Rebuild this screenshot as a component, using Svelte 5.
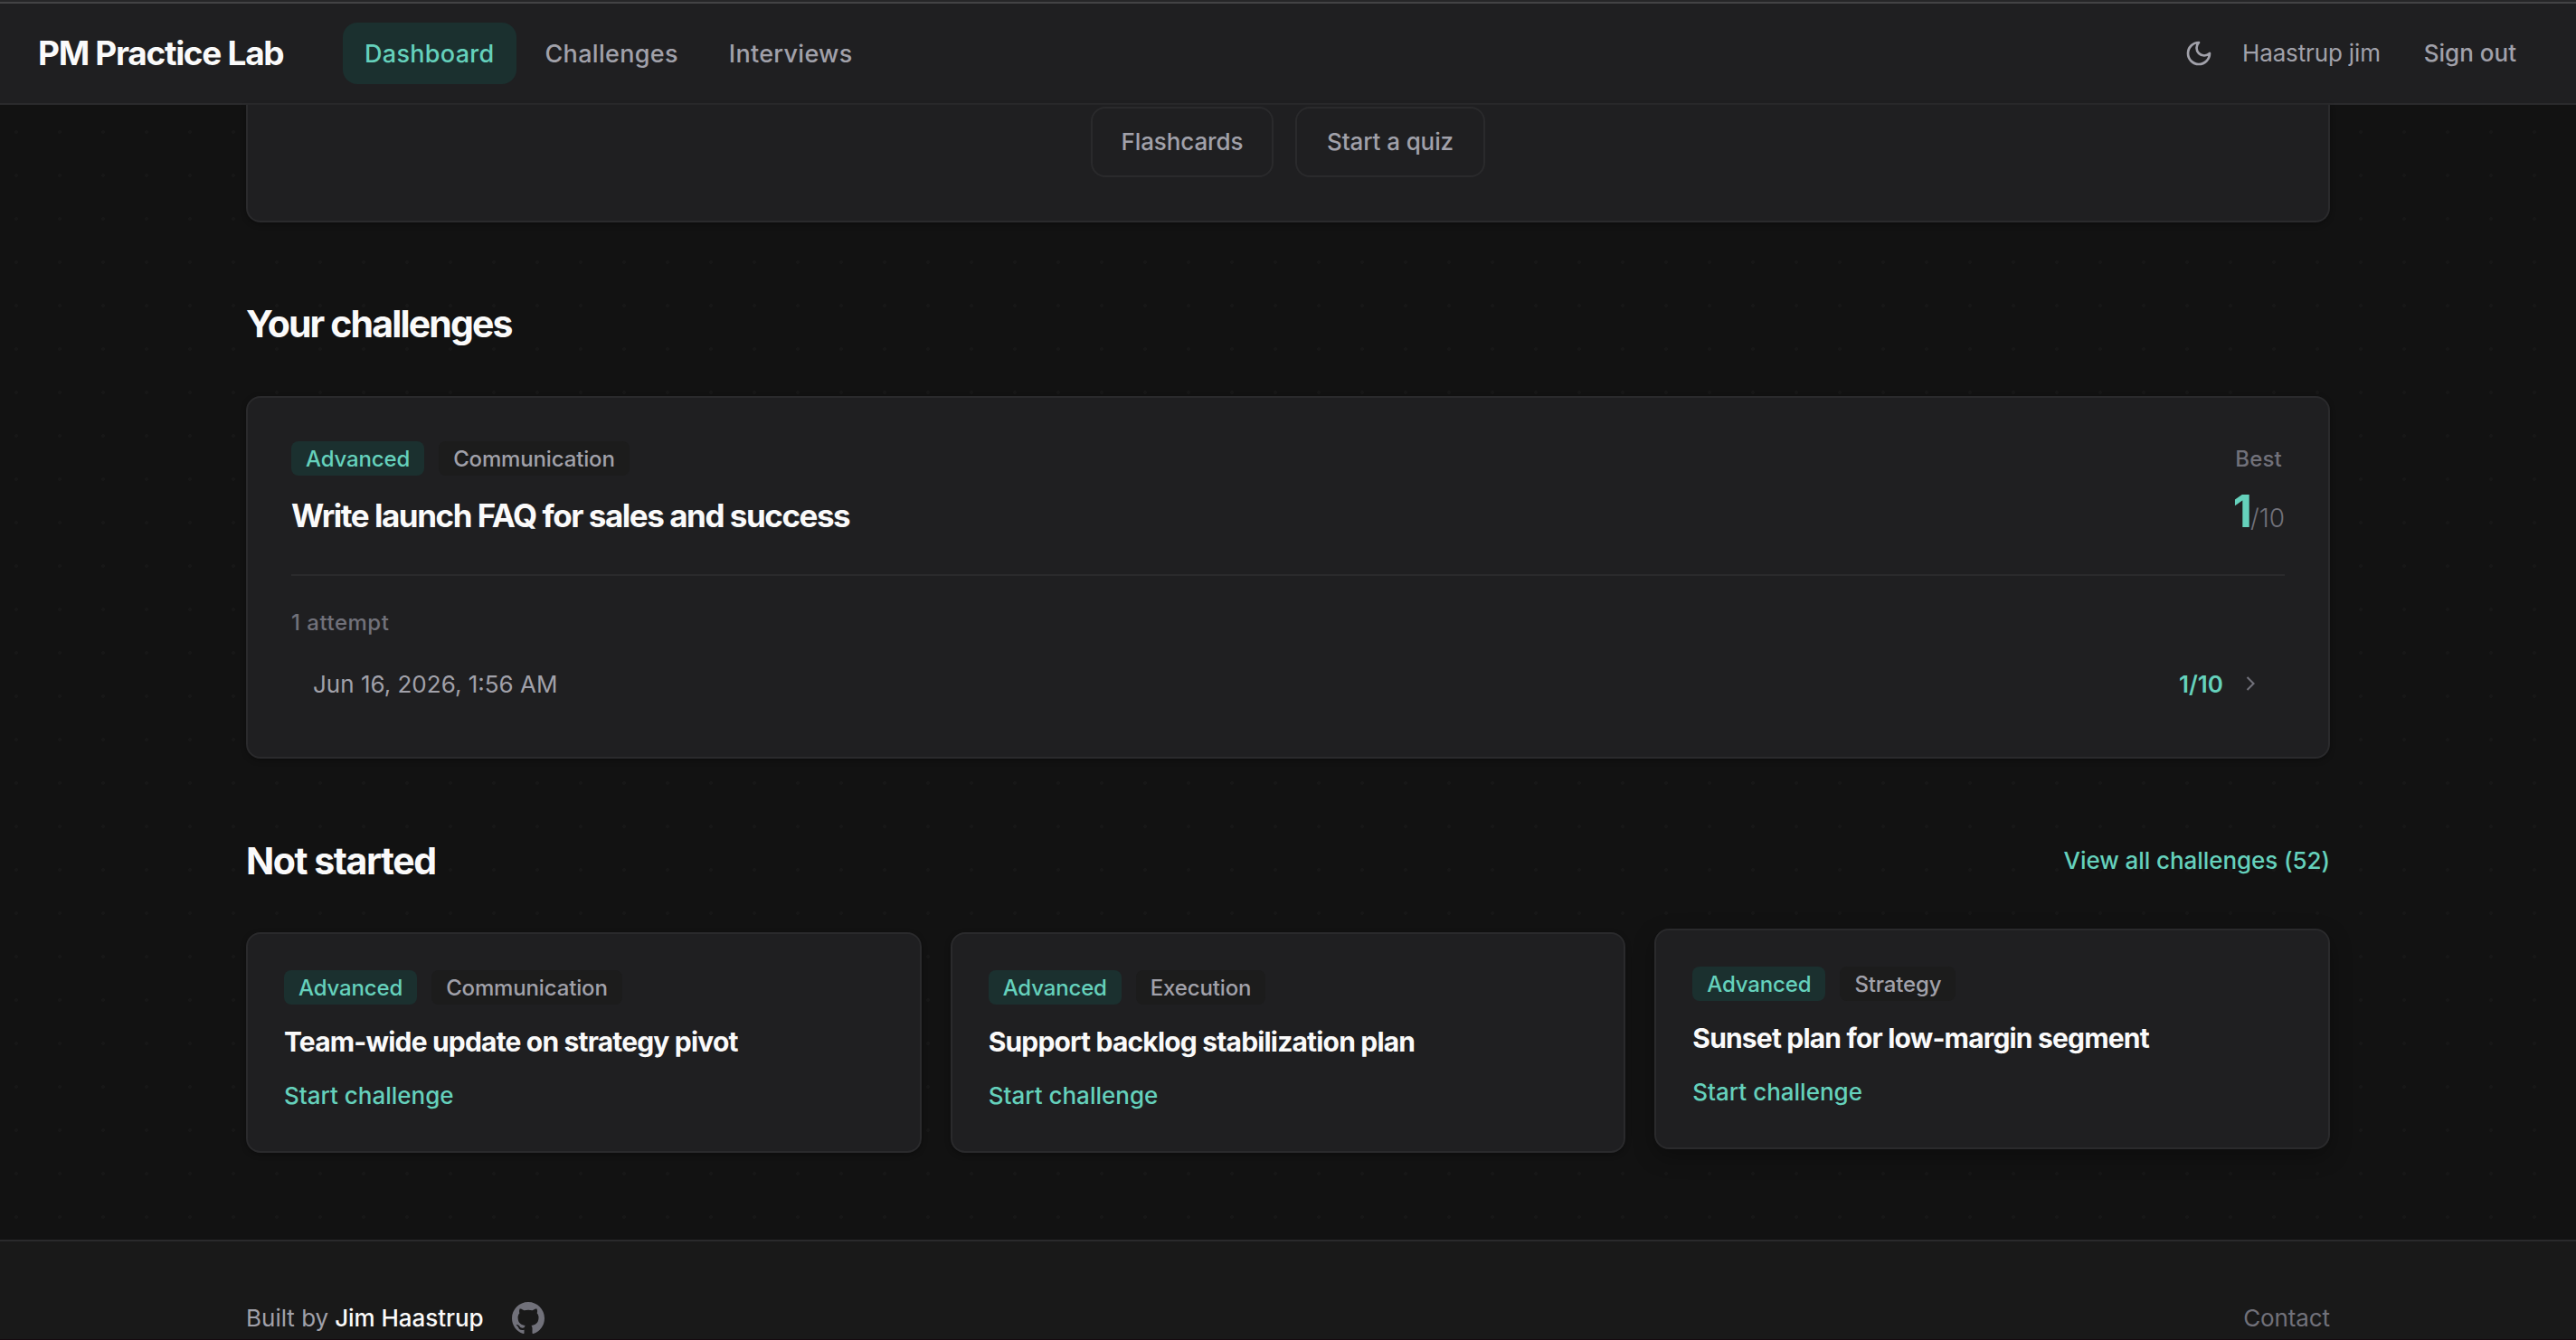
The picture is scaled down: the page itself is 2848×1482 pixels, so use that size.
<script>
    const links = ['Dashboard', 'Challenges', 'Interviews']
    let active = 'Dashboard'

    const notStarted = [
        { level: 'Advanced', topic: 'Communication', title: 'Team-wide update on strategy pivot' },
        { level: 'Advanced', topic: 'Execution', title: 'Support backlog stabilization plan' },
        { level: 'Advanced', topic: 'Strategy', title: 'Sunset plan for low-margin segment', raised: true }
    ]
    const total = 52
</script>

<div class="page">
    <header>
        <div class="brand">PM Practice Lab</div>
        <nav>
            {#each links as link}
                <button class="nav-link" class:active={link === active} on:click={() => active = link}>{link}</button>
            {/each}
        </nav>
        <div class="account">
            <svg class="moon" viewBox="0 0 24 24"><path d="M12 3a6 6 0 0 0 9 9 9 9 0 1 1-9-9Z" /></svg>
            <span class="user">Haastrup jim</span>
            <span class="signout">Sign out</span>
        </div>
    </header>

    <main>
        <section class="card practice">
            <button class="outline flash">Flashcards</button>
            <button class="outline quiz">Start a quiz</button>
        </section>

        <h2 class="yours">Your challenges</h2>
        <section class="card challenge">
            <div class="top">
                <div>
                    <div class="badges">
                        <span class="badge level">Advanced</span>
                        <span class="badge topic">Communication</span>
                    </div>
                    <h3>Write launch FAQ for sales and success</h3>
                </div>
                <div class="best">
                    <span class="label">Best</span>
                    <div class="score"><b>1</b><span>/10</span></div>
                </div>
            </div>
            <div class="attempts">1 attempt</div>
            <div class="attempt">
                <span class="date">Jun 16, 2026, 1:56 AM</span>
                <span class="result">1/10</span>
                <svg class="chevron" viewBox="0 0 24 24"><path d="M9 18l6-6-6-6" /></svg>
            </div>
        </section>

        <div class="heading">
            <h2 class="not">Not started</h2>
            <span class="all">View all challenges ({total})</span>
        </div>
        <div class="grid">
            {#each notStarted as item}
                <article class="card small" class:raised={item.raised}>
                    <div class="badges">
                        <span class="badge level">{item.level}</span>
                        <span class="badge topic">{item.topic}</span>
                    </div>
                    <h4>{item.title}</h4>
                    <span class="start">Start challenge</span>
                </article>
            {/each}
        </div>
    </main>

    <footer>
        <div class="inner">
            <span class="built">Built by</span>
            <span class="author">Jim Haastrup</span>
            <svg class="github" viewBox="0 0 16 16"><path d="M8 0C3.58 0 0 3.58 0 8c0 3.54 2.29 6.53 5.47 7.59.4.07.55-.17.55-.38 0-.19-.01-.82-.01-1.49-2.01.37-2.53-.49-2.69-.94-.09-.23-.48-.94-.82-1.13-.28-.15-.68-.52-.01-.53.63-.01 1.08.58 1.23.82.72 1.21 1.87.87 2.33.66.07-.52.28-.87.51-1.07-1.78-.2-3.64-.89-3.64-3.95 0-.87.31-1.59.82-2.15-.08-.2-.36-1.02.08-2.12 0 0 .67-.21 2.2.82.64-.18 1.32-.27 2-.27s1.36.09 2 .27c1.53-1.04 2.2-.82 2.2-.82.44 1.1.16 1.92.08 2.12.51.56.82 1.27.82 2.15 0 3.07-1.87 3.75-3.65 3.95.29.25.54.73.54 1.48 0 1.07-.01 1.93-.01 2.2 0 .21.15.46.55.38A8.01 8.01 0 0 0 16 8c0-4.42-3.58-8-8-8Z" /></svg>
            <span class="contact">Contact</span>
        </div>
    </footer>
</div>

<style>
    :global(body) {
        margin: 0;
        overflow: hidden;
        background: #121212;
    }
    .page {
        width: 2848px;
        height: 1482px;
        box-sizing: border-box;
        overflow: hidden;
        display: flex;
        flex-direction: column;
        font-family: Inter, sans-serif;
        font-size: 26px;
        color: #a1a1aa;
        white-space: nowrap;
        background: radial-gradient(circle, #171717 1.8px, transparent 2.2px) -6px -22px / 48px 48px, #121212;
        border-bottom: 1px solid #150a10;
    }
    button {
        font: inherit;
        color: inherit;
        background: none;
        border: 0;
        padding: 0;
        font-weight: 500;
    }
    h2, h3, h4 {
        margin: 0;
        color: #fafafa;
        font-weight: 700;
    }
    header {
        flex: none;
        height: 116px;
        box-sizing: border-box;
        display: flex;
        align-items: center;
        padding: 0 66px 0 42px;
        background: linear-gradient(#262628 2px, #434345 2px 4px, #1f1f21 4px);
        border-bottom: 2px solid #2a2a2c;
    }
    .brand {
        width: 337px;
        font-size: 37px;
        font-weight: 700;
        letter-spacing: -1.3px;
        color: #fafafa;
        padding-top: 3px;
    }
    nav {
        display: flex;
        gap: 8px;
        padding-top: 3px;
    }
    .nav-link {
        height: 68px;
        padding: 1px 24px 0;
        border-radius: 16px;
        font-size: 27px;
        letter-spacing: 0.3px;
    }
    .nav-link.active {
        color: #65d1bc;
        background: #1b302f;
    }
    .account {
        margin-left: auto;
        display: flex;
        align-items: center;
        padding-top: 3px;
    }
    .moon {
        width: 32px;
        height: 32px;
        margin-right: 32px;
        fill: none;
        stroke: #a1a1aa;
        stroke-width: 2;
        stroke-linecap: round;
        stroke-linejoin: round;
    }
    .user {
        margin-right: 48px;
        letter-spacing: -0.15px;
    }
    .signout {
        font-weight: 500;
    }
    main {
        width: 2304px;
        margin: 0 auto;
        flex: none;
        height: 1255px;
    }
    .card {
        box-sizing: border-box;
        background: #1f1f21;
        border: 2px solid #2a2a2c;
        border-radius: 16px;
        box-shadow: 0 2px 6px rgba(0, 0, 0, 0.3);
    }
    .practice {
        height: 130px;
        border-top: 0;
        border-radius: 0 0 16px 16px;
        display: flex;
        justify-content: center;
        align-items: flex-start;
        gap: 24px;
        padding-top: 2px;
    }
    .outline {
        height: 78px;
        box-sizing: border-box;
        padding-bottom: 2px;
        border: 2px solid #2a2a2c;
        border-radius: 16px;
        letter-spacing: -0.1px;
    }
    .flash {
        width: 202px;
    }
    .quiz {
        width: 210px;
    }
    h2 {
        font-size: 41px;
        line-height: 50px;
    }
    .yours {
        padding: 87px 0 55px;
        letter-spacing: -1.85px;
    }
    .not {
        letter-spacing: -1.45px;
    }
    .challenge {
        height: 401px;
        padding: 48px;
    }
    .top {
        height: 149px;
        box-sizing: border-box;
        display: flex;
        justify-content: space-between;
        border-bottom: 2px solid #2a2a2c;
    }
    .badges {
        display: flex;
        gap: 16px;
    }
    .badge {
        height: 38px;
        line-height: 40px;
        padding: 0 16px;
        border-radius: 8px;
        font-size: 24px;
        font-weight: 500;
        letter-spacing: -0.15px;
    }
    .level {
        color: #65d1bc;
        background: #1b302f;
    }
    .topic {
        background: #1c1c1c;
    }
    h3 {
        margin-top: 20px;
        font-size: 35px;
        line-height: 48px;
        letter-spacing: -1.46px;
    }
    .best {
        text-align: right;
        color: #71717a;
    }
    .label {
        display: block;
        line-height: 40px;
        font-size: 24px;
        font-weight: 500;
        letter-spacing: 0.2px;
        padding-right: 3px;
    }
    .score {
        line-height: 56px;
        margin-top: 10px;
        font-size: 28px;
        font-weight: 300;
    }
    .score b {
        font-size: 49px;
        font-weight: 700;
        letter-spacing: -2px;
        color: #65d1bc;
    }
    .attempts {
        margin-top: 36px;
        line-height: 32px;
        font-size: 24px;
        font-weight: 500;
        letter-spacing: 0.5px;
        color: #71717a;
    }
    .attempt {
        display: flex;
        align-items: center;
        height: 64px;
        margin-top: 19px;
        padding: 0 24px;
    }
    .result {
        margin-left: auto;
        font-weight: 600;
        color: #65d1bc;
    }
    .chevron {
        width: 28px;
        height: 28px;
        margin-left: 16px;
        fill: none;
        stroke: #71717a;
        stroke-width: 1.8;
    }
    .heading {
        display: flex;
        justify-content: space-between;
        align-items: center;
        height: 50px;
        padding: 88px 0 54px;
    }
    .all, .start {
        color: #65d1bc;
        font-weight: 500;
    }
    .all {
        padding-bottom: 2px;
        letter-spacing: -0.07px;
    }
    .grid {
        display: grid;
        grid-template-columns: repeat(3, 1fr);
        gap: 32px;
    }
    .small {
        height: 244px;
        padding: 40px;
    }
    .raised {
        transform: translateY(-4px);
        box-shadow: 0 8px 24px rgba(0, 0, 0, 0.3);
    }
    h4 {
        margin-top: 20px;
        font-size: 30px;
        line-height: 42px;
        letter-spacing: -0.82px;
    }
    .start {
        display: block;
        margin-top: 21px;
        line-height: 36px;
    }
    footer {
        flex: 1;
        background: #191919;
        border-top: 2px solid #2a2a2c;
    }
    .inner {
        width: 2304px;
        height: 169px;
        margin: 0 auto;
        display: flex;
        align-items: center;
    }
    .author {
        margin-left: 7px;
        font-weight: 500;
        letter-spacing: -0.05px;
        color: #fafafa;
    }
    .github {
        width: 36px;
        height: 36px;
        margin-left: 31px;
        fill: #71717a;
    }
    .contact {
        margin-left: auto;
        color: #71717a;
        letter-spacing: -0.1px;
    }
</style>
